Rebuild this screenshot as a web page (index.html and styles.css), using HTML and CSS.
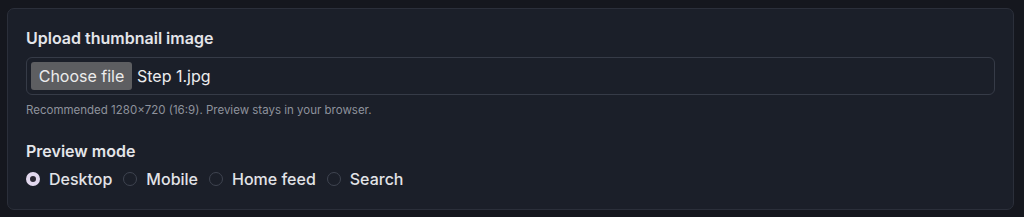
FILE: index.html
```html
<!DOCTYPE html>
<html lang="en">
<head>
    <meta charset="UTF-8">
    <title>Thumbnail preview</title>
    <link rel="stylesheet" href="styles.css">
</head>
<body>
    <section class="card">
        <div class="field">
            <label class="field-label">Upload thumbnail image</label>
            <div class="file-input">
                <span class="file-btn">Choose file</span>
                <span class="file-name">Step 1.jpg</span>
            </div>
            <p class="hint">Recommended 1280×720 (16:9). Preview stays in your browser.</p>
        </div>

        <div class="field">
            <span class="field-label">Preview mode</span>
            <div class="radios">
                <label class="radio"><span class="dot checked"></span>Desktop</label>
                <label class="radio"><span class="dot"></span>Mobile</label>
                <label class="radio"><span class="dot"></span>Home feed</label>
                <label class="radio"><span class="dot"></span>Search</label>
            </div>
        </div>
    </section>
</body>
</html>
```

FILE: styles.css
```css
* {
    margin: 0;
    padding: 0;
    box-sizing: border-box;
}

body {
    background-color: #15171e;
    color: #e6e7ea;
    font-family: Inter, "Noto Sans", sans-serif;
    padding: 8px 10px 6px 7px;
}

.card {
    background-color: #1b1f29;
    border: 1px solid #2b2f3a;
    border-radius: 7px;
    padding: 20px 18px 21px 18px;
}

.field-label {
    display: block;
    font-size: 16px;
    font-weight: 600;
    color: #e4e5e9;
    line-height: 18px;
}

.file-input {
    margin-top: 10px;
    height: 38px;
    border: 1px solid #363b47;
    border-radius: 6px;
    display: flex;
    align-items: center;
    padding: 0 4px;
    gap: 5px;
}

.file-btn {
    background-color: #5d5e61;
    color: #ececec;
    border-radius: 3px;
    height: 28px;
    width: 101px;
    display: flex;
    align-items: center;
    justify-content: center;
    font-size: 16px;
}

.file-name {
    font-size: 16px;
    color: #ececee;
}

.hint {
    margin-top: 8px;
    font-size: 11.5px;
    color: #8e929c;
    line-height: 14px;
}

.field + .field {
    margin-top: 25px;
}

.radios {
    margin-top: 10px;
    display: flex;
    gap: 11px;
}

.radio {
    display: flex;
    align-items: center;
    gap: 9px;
    font-size: 16px;
    font-weight: 500;
    color: #e2e3e7;
    line-height: 18px;
}

.dot {
    width: 14px;
    height: 14px;
    border-radius: 50%;
    border: 1.5px solid #3f4450;
}

.dot.checked {
    border: 4px solid #e2d8ee;
    background-color: #2a2732;
}
```
